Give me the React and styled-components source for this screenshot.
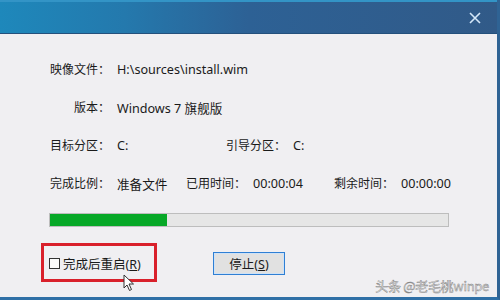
import React from "react";
import styled, { createGlobalStyle } from "styled-components";

const Global = createGlobalStyle`
  html, body { margin: 0; padding: 0; }
  body { width: 500px; height: 300px; overflow: hidden; background: #f0f0f2; }
`;

const FONT = `"Segoe UI", "Noto Sans", "Noto Sans CJK SC", sans-serif`;

const Window = styled.div`
  position: relative;
  width: 497px;
  height: 297px;
  border-right: 3px solid #2f6394;
  border-bottom: 3px solid #2f6fa6;
  background: #f0eff2;
  display: flex;
  flex-direction: column;
  font-family: ${FONT};
  font-size: 12px;
  color: #1a1a1a;
`;

const TitleBar = styled.div`
  height: 31px;
  border-top: 2px solid #3394c6;
  border-bottom: 1px solid #24507c;
  background: linear-gradient(90deg, #1e88bb 0%, #2479ad 25%, #2d6195 50%, #315a88 100%);
  display: flex;
  justify-content: flex-end;
  align-items: center;
  padding-right: 16px;
`;

const CloseIcon = styled.svg`
  width: 12px;
  height: 12px;
`;

const Body = styled.div`
  flex: 1;
  padding: 16px 0 0 49px;
  display: flex;
  flex-direction: column;
`;

const Row = styled.div`
  height: 38px;
  display: flex;
  align-items: center;
`;

const Field = styled.div`
  display: flex;
  align-items: center;
  width: ${(p) => (p.$w ? `${p.$w}px` : "auto")};
`;

const Label = styled.span`
  width: ${(p) => (p.$w ? `${p.$w}px` : "auto")};
  text-align: right;
  white-space: nowrap;
  margin-right: 7px;
`;

const Value = styled.span`
  white-space: nowrap;
  font-size: 12.6px;
`;

const Track = styled.div`
  margin-top: 11px;
  width: 398px;
  height: 12px;
  border: 1px solid #bdbdbd;
  background: #e6e6e6;
`;

const Fill = styled.div`
  height: 100%;
  background: #07a827;
`;

const Footer = styled.div`
  margin-top: 25px;
  display: flex;
  align-items: center;
  height: 23px;
`;

const CheckLabel = styled.label`
  display: flex;
  align-items: center;
  gap: 3px;
  width: 164px;
  font-size: 12.5px;
`;

const Box = styled.span`
  width: 9px;
  height: 9px;
  border: 1px solid #333;
  background: #fbfbfb;
`;

const Button = styled.button`
  width: 72px;
  height: 23px;
  border: 1px solid #2f7fd4;
  box-shadow: inset 0 0 0 1px #cfe2f6;
  background: #e1e1e1;
  font-family: ${FONT};
  font-size: 12.5px;
  color: #1a1a1a;
  padding: 0;
`;

const U = styled.span`
  text-decoration: underline;
`;

const Highlight = styled.div`
  position: absolute;
  left: 41px;
  top: 243px;
  width: 110px;
  height: 33px;
  border: 3px solid #d9202b;
  pointer-events: none;
`;

const Cursor = styled.svg`
  position: absolute;
  left: 123px;
  top: 274px;
  width: 12px;
  height: 18px;
`;

const Watermark = styled.div`
  position: absolute;
  right: 8px;
  bottom: 2px;
  font-family: "Noto Sans CJK SC", "Noto Sans", sans-serif;
  font-size: 13px;
  color: #e4e4e4;
  -webkit-text-stroke: 0.4px #7a7a7a;
  letter-spacing: -0.3px;
`;

export default function App() {
  return (
    <>
      <Global />
      <Window>
        <TitleBar>
          <CloseIcon viewBox="0 0 12 12">
            <path d="M1 1 L11 11 M11 1 L1 11" stroke="#d4e7f8" strokeWidth="1.6" />
          </CloseIcon>
        </TitleBar>
        <Body>
          <Row>
            <Field>
              <Label $w={61}>映像文件：</Label>
              <Value>H:\sources\install.wim</Value>
            </Field>
          </Row>
          <Row>
            <Field>
              <Label $w={61}>版本：</Label>
              <Value>Windows 7 旗舰版</Value>
            </Field>
          </Row>
          <Row>
            <Field $w={177}>
              <Label $w={61}>目标分区：</Label>
              <Value>C:</Value>
            </Field>
            <Field>
              <Label>引导分区：</Label>
              <Value>C:</Value>
            </Field>
          </Row>
          <Row>
            <Field $w={137}>
              <Label $w={61}>完成比例：</Label>
              <Value>准备文件</Value>
            </Field>
            <Field $w={148}>
              <Label>已用时间：</Label>
              <Value>00:00:04</Value>
            </Field>
            <Field>
              <Label>剩余时间：</Label>
              <Value>00:00:00</Value>
            </Field>
          </Row>
          <Track>
            <Fill style={{ width: "29.3%" }} />
          </Track>
          <Footer>
            <CheckLabel>
              <Box />
              <span>
                完成后重启(<U>R</U>)
              </span>
            </CheckLabel>
            <Button>
              停止(<U>S</U>)
            </Button>
          </Footer>
        </Body>
        <Highlight />
        <Cursor viewBox="0 0 12 18">
          <path d="M1 1 L1 14 L4 11 L6.5 16.5 L8.5 15.5 L6 10 L10.5 10 Z" fill="#fff" stroke="#333" strokeWidth="1" strokeLinejoin="round" />
        </Cursor>
        <Watermark>头条 @老毛桃winpe</Watermark>
      </Window>
    </>
  );
}
